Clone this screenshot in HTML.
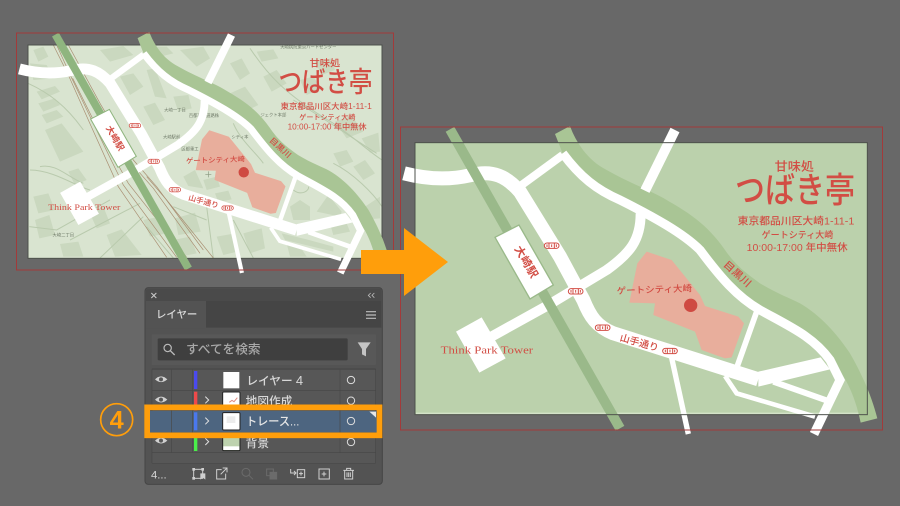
<!DOCTYPE html>
<html><head><meta charset="utf-8"><style>
html,body{margin:0;padding:0;background:#686868;width:900px;height:506px;overflow:hidden}
svg{display:block}
text{font-family:"Liberation Sans","Noto Sans CJK JP",sans-serif}
.r{fill:#d24d44}
.g{fill:#717c6a;font-size:13px}
.p{fill:#d8d8d8;font-weight:500}
</style></head><body>
<svg width="900" height="506" viewBox="0 0 900 506" xmlns="http://www.w3.org/2000/svg">
<rect width="900" height="506" fill="#686868"/>
<defs>
<g id="pill">
  <rect x="-22" y="-8" width="44" height="16" rx="8" fill="#fff" stroke="#d24d44" stroke-width="3"/>
  <path d="M-8,-8 V8 M8,-8 V8 M-14,-4 V4 M0,-4 V4 M14,-4 V4" stroke="#d24d44" stroke-width="3" fill="none"/>
</g>
<g id="map">
  <path fill="#a9c595" d="M465,42 L510,18 C525,60 560,120 620,150 C690,190 760,215 800,240 C860,275 920,310 975,390 C1010,440 1040,460 1080,490 C1130,520 1170,535 1200,550 C1260,585 1310,640 1350,700 C1390,770 1415,830 1432,895 L1382,908 C1370,850 1345,770 1290,720 C1240,650 1170,620 1080,570 C1010,530 960,470 900,390 C850,340 760,290 660,240 C590,210 540,170 488,100 Z"/>
  <g fill="none" stroke="#fff" stroke-linejoin="miter">
    <path stroke-width="42" d="M12,160 C70,175 140,182 210,166 C280,148 320,170 360,215 L480,410 L550,540 C570,590 590,620 640,640 L1075,778"/>
    <path stroke-width="24" d="M365,195 L488,105"/>
    <path stroke-width="27" d="M488,100 C540,170 590,210 660,240 C760,290 850,340 900,390 C960,470 1010,530 1080,570 C1170,620 1240,650 1290,720 L1320,780 L1242,942"/>
    <path stroke-width="30" d="M825,30 L735,212"/>
    <path stroke-width="30" d="M722,280 C722,360 690,400 620,450 L440,558 L265,655"/>
    <path stroke-width="17" d="M1070,575 L1012,738"/>
    <path stroke-width="16" d="M812,700 L865,942"/>
    <path stroke-width="18" d="M1120,785 L1282,842"/>
    <path stroke-width="14" d="M975,768 L1010,820 L1245,890"/>
  </g>
  <polygon fill="#fff" points="1075,755 1262,712 1290,748 1075,800"/>
  <polygon fill="#fff" points="168,635 245,592 317,715 238,758"/>
  <path d="M150,28 L660,925" fill="none" stroke="var(--s)" stroke-width="30"/>
  <polygon points="285,352 357,315 460,495 390,537" fill="#fff" stroke="var(--s)" stroke-width="4"/>
  <polygon fill="#e8ae9c" points="712,430 740,395 815,420 900,525 915,558 1015,590 1032,610 995,712 975,715 905,690 885,635 760,585 765,550 688,548"/>
  <circle cx="872" cy="556" r="20" fill="#cf4a42"/>
</g>
<g id="pills4">
  <use href="#pill" x="455" y="377"/><use href="#pill" x="527" y="514"/><use href="#pill" x="608" y="623"/><use href="#pill" x="810" y="693"/>
</g>
</defs>

<!-- LEFT -->
<g transform="translate(0,20) scale(.33333)">
  <rect x="84" y="75" width="1062" height="640" fill="#d9e4d0"/>
  <g fill="#cad8bf">
    <polygon points="135,330 185,310 250,395 180,425"/><polygon points="110,215 165,198 180,215 125,238"/><polygon points="115,250 165,235 180,255 130,275"/><polygon points="125,285 170,270 190,290 140,310"/>
    <polygon points="100,90 130,80 145,110 115,125"/><polygon points="300,90 370,78 400,105 330,125"/><polygon points="360,170 400,160 430,200 390,225"/><polygon points="440,150 465,145 500,235 465,230"/>
    <polygon points="430,260 465,248 495,300 460,315"/><polygon points="520,230 565,225 575,265 535,275"/><polygon points="540,90 610,80 630,115 590,140"/>
    <polygon points="690,130 725,115 750,160 720,180"/><polygon points="770,95 820,88 835,115 785,125"/><polygon points="690,220 735,200 775,255 735,275"/>
    <polygon points="1005,305 1055,288 1090,335 1040,355"/><polygon points="1085,355 1135,338 1140,395 1110,398"/><polygon points="950,575 985,525 1025,575 1020,590"/>
    <polygon points="870,560 900,540 930,560 930,600 880,600"/><polygon points="650,650 695,642 712,695 670,705"/><polygon points="730,640 785,625 795,685 750,700"/>
    <polygon points="320,645 365,628 425,705 345,710"/><polygon points="105,600 148,585 165,645 118,655"/><polygon points="180,672 235,665 250,710 190,710"/>
    <polygon points="990,610 1035,598 1050,635 1000,645"/><polygon points="845,640 920,658 1000,680 1000,695 855,660"/><polygon points="550,470 585,450 610,505 565,498"/>
    <polygon points="645,520 685,512 695,538 655,546"/><polygon points="945,125 995,115 1005,150 965,165"/><polygon points="1095,560 1140,530 1140,595 1105,598"/>
    <polygon points="525,595 585,578 602,635 535,645"/>
    <polygon points="790,170 830,150 860,190 815,215"/><polygon points="900,180 940,170 965,205 920,225"/><polygon points="1060,440 1095,420 1125,460 1090,480"/><polygon points="1000,400 1040,390 1060,425 1020,440"/>
    <polygon points="440,80 500,80 520,100 460,115"/><polygon points="90,130 140,135 160,175 100,180"/><polygon points="100,530 145,520 165,570 115,580"/>
    <polygon points="205,455 235,445 260,480 225,495"/><polygon points="270,580 310,560 330,610 290,625"/><polygon points="430,600 480,590 500,640 450,650"/>
    <polygon points="520,660 570,650 590,700 540,710"/><polygon points="860,670 900,680 920,710 870,710"/><polygon points="610,480 650,470 660,500 620,510"/>
  </g>
  <g fill="none" stroke="#b9caad" stroke-width="3">
    <path d="M84,190 C150,220 200,260 250,330 M90,450 C160,450 230,500 270,510 M120,440 C170,430 200,470 250,490"/>
    <path d="M88,620 L170,630 L330,540 M210,660 L420,550 M300,714 L430,590 M750,85 C800,160 850,220 1000,310 C1060,350 1100,390 1146,420"/>
    <path d="M880,240 C980,300 1050,350 1130,400 M1000,430 C1060,460 1120,520 1146,560 M700,310 C720,360 770,400 790,430 M540,190 L610,240 M620,190 L700,240"/>
    <path d="M880,510 C905,530 930,510 925,500 M520,560 L620,600 M440,620 L520,714 M700,600 L760,714 M620,560 L640,714"/>
  </g>
  <g fill="none" stroke="#a88d70" stroke-width="2">
    <path d="M160,75 L205,165 L265,300 L355,500 L500,712"/><path d="M170,75 L212,168 L275,300 L370,495 L530,712"/><path d="M218,175 L285,310 L385,490 L560,712"/>
    <path d="M205,75 L300,250 L400,420 L470,500 L610,690"/><path d="M192,75 L290,255 L392,428 L460,505 L600,700"/><path d="M440,470 L500,540 L640,714"/>
  </g>
  <text class="g" x="525" y="275" text-anchor="middle">大崎一丁目</text>
  <text class="g" x="612" y="291" text-anchor="middle">百都高速道路株</text>
  <text class="g" x="515" y="355" text-anchor="middle">大崎駅前</text>
  <text class="g" x="570" y="392" text-anchor="middle">区都重工</text>
  <text class="g" x="925" y="86" text-anchor="middle">大崎病院東京ハートセンター</text>
  <text class="g" x="190" y="650" text-anchor="middle">大崎二丁目</text>
  <text class="g" x="820" y="290" text-anchor="middle">ジェクト本部</text>
  <text class="g" x="720" y="355" text-anchor="middle">シティ本</text>
  <path d="M625,454 V472 M616,463 H634" stroke="#8a9880" stroke-width="2"/>
  <rect x="84" y="75" width="1062" height="640" fill="none" stroke="#4e524c" stroke-width="3"/>
</g>
<g transform="translate(16.27,27.23) scale(.26087)" style="--s:#8fb57f"><use href="#map"/><use href="#pills4"/></g>
<g transform="translate(16.27,27.23) scale(.26087)">
  <text class="r" x="1183" y="151" font-size="36" font-weight="500" text-anchor="middle" textLength="118" lengthAdjust="spacingAndGlyphs">甘味処</text>
  <text class="r" x="1005" y="247" font-size="106" font-weight="500" textLength="360" lengthAdjust="spacingAndGlyphs">つばき亭</text>
  <text class="r" x="1013" y="314" font-size="30" font-weight="500" textLength="350" lengthAdjust="spacingAndGlyphs">東京都品川区大崎1-11-1</text>
  <text class="r" x="1085" y="354" font-size="27" font-weight="500" textLength="215" lengthAdjust="spacingAndGlyphs">ゲートシティ大崎</text>
  <text class="r" x="1040" y="393" font-size="30" font-weight="500" textLength="303" lengthAdjust="spacingAndGlyphs">10:00-17:00 年中無休</text>
  <text class="r" x="122" y="701" font-size="31" style="font-family:'Liberation Serif',serif" textLength="277" lengthAdjust="spacingAndGlyphs">Think Park Tower</text>
  <text class="r" x="650" y="518" font-size="27" font-weight="500" transform="rotate(-2 763 508)" textLength="226" lengthAdjust="spacingAndGlyphs">ゲートシティ大崎</text>
  <text class="r" font-size="33" font-weight="700" transform="translate(378,425) rotate(60)" x="-52" y="11" textLength="105" lengthAdjust="spacingAndGlyphs">大崎駅</text>
  <text class="r" font-size="29" font-weight="500" transform="translate(718,668) rotate(16)" x="-60" y="10" textLength="120" lengthAdjust="spacingAndGlyphs">山手通り</text>
  <text class="r" font-size="30" font-weight="500" transform="translate(1012,462) rotate(42)" x="-50" y="10" textLength="100" lengthAdjust="spacingAndGlyphs">目黒川</text>
</g>
<rect x="16.5" y="33" width="377" height="237" fill="none" stroke="#a23a3a" stroke-width="1"/>

<!-- RIGHT -->
<g transform="translate(400,120) scale(.33333)">
  <rect x="45" y="68" width="1357" height="816" fill="#bbd1ac"/>
  <path d="M48,880 H1400" stroke="#d3e2c8" stroke-width="4"/>
  <g style="--s:#9ab98a"><use href="#map"/><use href="#pills4"/></g>
  <rect x="45" y="68" width="1357" height="816" fill="none" stroke="#4e524c" stroke-width="3"/>
  <text class="r" x="1183" y="151" font-size="36" font-weight="500" text-anchor="middle" textLength="118" lengthAdjust="spacingAndGlyphs">甘味処</text>
  <text class="r" x="1005" y="247" font-size="106" font-weight="500" textLength="360" lengthAdjust="spacingAndGlyphs">つばき亭</text>
  <text class="r" x="1013" y="314" font-size="30" font-weight="500" textLength="350" lengthAdjust="spacingAndGlyphs">東京都品川区大崎1-11-1</text>
  <text class="r" x="1085" y="354" font-size="27" font-weight="500" textLength="215" lengthAdjust="spacingAndGlyphs">ゲートシティ大崎</text>
  <text class="r" x="1040" y="393" font-size="30" font-weight="500" textLength="303" lengthAdjust="spacingAndGlyphs">10:00-17:00 年中無休</text>
  <text class="r" x="122" y="701" font-size="31" style="font-family:'Liberation Serif',serif" textLength="277" lengthAdjust="spacingAndGlyphs">Think Park Tower</text>
  <text class="r" x="650" y="518" font-size="27" font-weight="500" transform="rotate(-2 763 508)" textLength="226" lengthAdjust="spacingAndGlyphs">ゲートシティ大崎</text>
  <text class="r" font-size="33" font-weight="700" transform="translate(378,425) rotate(60)" x="-52" y="11" textLength="105" lengthAdjust="spacingAndGlyphs">大崎駅</text>
  <text class="r" font-size="29" font-weight="500" transform="translate(718,668) rotate(16)" x="-60" y="10" textLength="120" lengthAdjust="spacingAndGlyphs">山手通り</text>
  <text class="r" font-size="30" font-weight="500" transform="translate(1012,462) rotate(42)" x="-50" y="10" textLength="100" lengthAdjust="spacingAndGlyphs">目黒川</text>
</g>
<rect x="400.5" y="127" width="482" height="303" fill="none" stroke="#a23a3a" stroke-width="1"/>

<!-- ARROW -->
<polygon fill="#ff9e0b" points="361,250 404,250 404,228 448,262 404,296 404,274 361,274"/>

<!-- PANEL -->
<g transform="translate(90,285) scale(.33333)">
  <rect x="165" y="8" width="712" height="590" rx="10" fill="#535353" stroke="#454545" stroke-width="3"/>
  <path d="M168,48 V18 Q168,11 175,11 H867 Q874,11 874,18 V48 Z" fill="#4a4a4a"/>
  <rect x="168" y="48" width="706" height="80" fill="#454545"/>
  <rect x="168" y="48" width="180" height="82" fill="#535353"/>
  <path d="M184,24 L199,39 M199,24 L184,39" stroke="#ccc" stroke-width="3"/>
  <path d="M842,24 L835,31 L842,38 M853,24 L846,31 L853,38" stroke="#bbb" stroke-width="2.500" fill="none"/>
  <text class="p" x="198" y="99" font-size="32" textLength="124" lengthAdjust="spacingAndGlyphs">レイヤー</text>
  <path d="M828,80 H858 M828,90 H858 M828,100 H858" stroke="#bdbdbd" stroke-width="3.500"/>
  <rect x="185" y="148" width="673" height="92" fill="#585858" rx="3"/>
  <rect x="203" y="160" width="570" height="66" rx="4" fill="#3f3f3f"/>
  <circle cx="233" cy="189" r="11" fill="none" stroke="#bbb" stroke-width="3.500"/>
  <path d="M241,197 L254,210" stroke="#bbb" stroke-width="4"/>
  <text x="288" y="205" font-size="37" font-weight="500" fill="#a8a8a8" textLength="224" lengthAdjust="spacingAndGlyphs">すべてを検索</text>
  <path d="M803,172 H842 L828,192 V214 L816,208 V192 Z" fill="#c4c4c4"/>
  <rect x="185" y="250" width="673" height="286" fill="#474747" rx="3"/>
  <g fill="#575757">
    <rect x="187" y="254" width="669" height="62"/><rect x="187" y="318" width="669" height="60"/><rect x="187" y="442" width="669" height="60"/><rect x="187" y="504" width="669" height="30"/>
  </g>
  <rect x="180" y="378" width="682" height="64" fill="#4d6580"/>
  <path d="M245,254 V502 M308,254 V502 M750,254 V502" stroke="#484848" stroke-width="2"/>
  <g><path d="M195,283 Q213,265 232,283 Q213,300 195,283 Z" fill="#d0d0d0"/><circle cx="213" cy="283" r="6" fill="#575757"/></g>
  <g transform="translate(0,61)"><path d="M195,283 Q213,265 232,283 Q213,300 195,283 Z" fill="#d0d0d0"/><circle cx="213" cy="283" r="6" fill="#575757"/></g>
  <g transform="translate(0,184)"><path d="M195,283 Q213,265 232,283 Q213,300 195,283 Z" fill="#d0d0d0"/><circle cx="213" cy="283" r="6" fill="#575757"/></g>
  <rect x="312" y="258" width="10" height="54" fill="#4a4aee"/><rect x="312" y="320" width="10" height="56" fill="#ee4a4a"/><rect x="312" y="382" width="10" height="54" fill="#4a78ee"/><rect x="312" y="444" width="10" height="54" fill="#4aee4a"/>
  <path d="M346,335 L356,345 L346,355 M346,398 L356,408 L346,418 M346,460 L356,470 L346,480" fill="none" stroke="#e0e0e0" stroke-width="3"/>
  <rect x="400" y="261" width="48" height="49" fill="#fff"/>
  <rect x="398" y="321" width="52" height="52" rx="3" fill="#fff" stroke="#222" stroke-width="3"/>
  <path d="M418,352 L426,346 L432,350 L442,338" stroke="#e08a80" stroke-width="3" fill="none"/>
  <rect x="398" y="383" width="52" height="52" rx="3" fill="#fff" stroke="#222" stroke-width="3"/>
  <rect x="410" y="394" width="26" height="20" fill="#ececec"/>
  <rect x="398" y="445" width="52" height="52" rx="3" fill="#bdd2ae" stroke="#222" stroke-width="3"/>
  <rect x="400" y="484" width="48" height="11" fill="#fff"/>
  <text class="p" x="469" y="300" font-size="35">レイヤー <tspan font-size="39">4</tspan></text>
  <text class="p" x="467" y="361" font-size="35" textLength="140" lengthAdjust="spacingAndGlyphs">地図作成</text>
  <text x="468" y="421" font-size="35" font-weight="500" fill="#e6e6e6" textLength="160" lengthAdjust="spacingAndGlyphs">トレース...</text>
  <text class="p" x="467" y="486" font-size="35" textLength="70" lengthAdjust="spacingAndGlyphs">背景</text>
  <g fill="none" stroke="#dcdcdc" stroke-width="3"><circle cx="783" cy="285" r="11"/><circle cx="783" cy="347" r="11"/><circle cx="783" cy="408" r="11"/><circle cx="783" cy="471" r="11"/></g>
  <polygon points="838,380 858,380 858,398" fill="#e6e6e6"/>
  <rect x="171.500" y="367" width="697" height="84" fill="none" stroke="#ff9e0b" stroke-width="17"/>
  <circle cx="80" cy="404" r="48" fill="none" stroke="#ff9e0b" stroke-width="5"/>
  <text x="80" y="431" font-size="76" font-weight="700" fill="#ff9e0b" text-anchor="middle">4</text>
  <text class="p" x="183" y="580" font-size="32" textLength="47" lengthAdjust="spacingAndGlyphs">4...</text>
  <g fill="none" stroke="#cfcfcf" stroke-width="3">
    <rect x="311" y="553" width="27" height="27"/>
    <path d="M395,554 H380 V582 H407 V566 M392,568 L410,550 M398,549 H411 V562"/>
    <path d="M602,552 V564 H618 M612,558 L618,564 L612,570"/><rect x="622" y="554" width="22" height="24"/><path d="M633,560 V572 M627,566 H639"/>
    <rect x="687" y="552" width="31" height="30"/><path d="M702,560 V574 M695,567 H709"/>
    <path d="M760,556 H792 M770,556 V550 H782 V556 M764,556 V582 H788 V556 M771,562 V576 M776,562 V576 M781,562 V576"/>
  </g>
  <g fill="#cfcfcf"><rect x="307" y="549" width="8" height="8"/><rect x="334" y="549" width="8" height="8"/><rect x="307" y="576" width="8" height="8"/><path d="M331,565 H346 V584 L338.500,578 L331,584 Z"/></g>
  <g fill="none" stroke="#6b6b6b" stroke-width="3"><circle cx="468" cy="562" r="12"/><path d="M477,571 L489,583"/><rect x="530" y="552" width="20" height="20"/><rect x="540" y="562" width="20" height="20" fill="#6b6b6b"/></g>
</g>
</svg>
</body></html>
